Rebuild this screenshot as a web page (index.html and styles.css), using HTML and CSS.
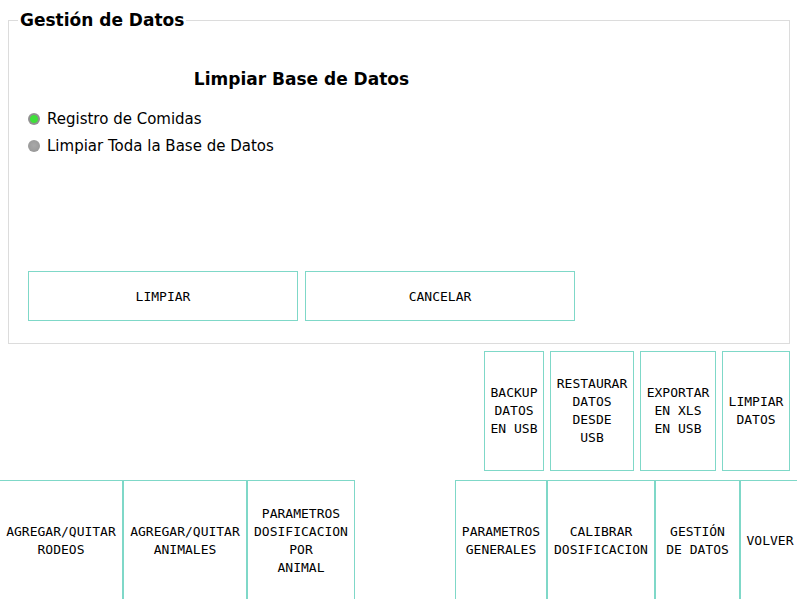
FILE: index.html
```html
<!DOCTYPE html>
<html lang="es">
<head>
<meta charset="utf-8">
<title>Gestión de Datos</title>
<link rel="stylesheet" href="styles.css">
</head>
<body>
<div class="top">
  <fieldset class="panel">
    <legend class="panel-title">Gestión de Datos</legend>
    <div class="panel-inner">
      <h2 class="section-title">Limpiar Base de Datos</h2>
      <div class="options">
        <div class="option"><span class="dot dot-on"></span><span>Registro de Comidas</span></div>
        <div class="option"><span class="dot"></span><span>Limpiar Toda la Base de Datos</span></div>
      </div>
      <div class="actions">
        <button class="btn action">LIMPIAR</button>
        <button class="btn action">CANCELAR</button>
      </div>
    </div>
  </fieldset>
  <div class="subnav">
    <button class="btn sub w-backup">BACKUP<br>DATOS<br>EN USB</button>
    <button class="btn sub w-rest">RESTAURAR<br>DATOS<br>DESDE<br>USB</button>
    <button class="btn sub w-exp">EXPORTAR<br>EN XLS<br>EN USB</button>
    <button class="btn sub w-limp">LIMPIAR<br>DATOS</button>
  </div>
</div>
<div class="mainnav">
  <div class="group">
    <button class="btn nav w-rodeos">AGREGAR/QUITAR<br>RODEOS</button>
    <button class="btn nav w-anim">AGREGAR/QUITAR<br>ANIMALES</button>
    <button class="btn nav w-dosif">PARAMETROS<br>DOSIFICACION<br>POR<br>ANIMAL</button>
  </div>
  <div class="group">
    <button class="btn nav w-gen">PARAMETROS<br>GENERALES</button>
    <button class="btn nav w-cal">CALIBRAR<br>DOSIFICACION</button>
    <button class="btn nav w-gest">GESTIÓN<br>DE DATOS</button>
    <button class="btn nav w-volver">VOLVER</button>
  </div>
</div>
</body>
</html>
```
FILE: styles.css
```css
html, body {
  margin: 0;
  padding: 0;
  overflow: hidden;
  background: #fff;
}
body {
  font-family: "DejaVu Sans", Verdana, sans-serif;
  color: #000;
  width: 797px;
}
.top {
  padding: 8px 7px 0 8px;
}
.panel {
  margin: 0;
  border: 1px solid #dcdcdc;
  padding: 0 19px 22px 19px;
  min-width: 0;
}
.panel-title {
  font-size: 17px;
  font-weight: bold;
  line-height: 24px;
  padding: 0 2px;
  margin-left: -10px;
}
.panel-inner {
  width: 547px;
}
.section-title {
  margin: 0;
  padding-top: 35px;
  text-align: center;
  font-size: 17px;
  font-weight: bold;
  line-height: 24px;
}
.options {
  margin-top: 18px;
  display: flex;
  flex-direction: column;
  gap: 7px;
}
.option {
  display: flex;
  align-items: center;
  gap: 7px;
  font-size: 15px;
  line-height: 20px;
}
.dot {
  width: 12px;
  height: 12px;
  border-radius: 50%;
  background: radial-gradient(circle at 50% 45%, #a8a8a8 0%, #9a9a9a 70%, #8c8c8c 100%);
  flex: none;
}
.dot-on {
  background: radial-gradient(circle, #3ee03a 0 3.5px, #8f8f8f 4.5px, #9c9c9c 100%);
}
.actions {
  margin-top: 115px;
  display: flex;
  gap: 7px;
}
.btn {
  background: #fff;
  border: 1px solid #7fd8c8;
  font-family: "DejaVu Sans Mono", monospace;
  color: #000;
  margin: 0;
  padding: 0 4px;
  cursor: pointer;
  text-align: center;
}
.action {
  flex: 1;
  height: 50px;
  font-size: 13px;
}
.subnav {
  margin-top: 7px;
  display: flex;
  justify-content: flex-end;
  gap: 6px;
}
.sub {
  height: 120px;
  font-size: 13px;
  line-height: 18px;
  padding: 0;
}
.w-backup { width: 60px; }
.w-rest { width: 84px; }
.w-exp { width: 76px; }
.w-limp { width: 68px; }
.mainnav {
  margin-top: 9px;
  display: flex;
  justify-content: space-between;
  width: 800px;
}
.group {
  display: flex;
}
.nav {
  height: 122px;
  font-size: 13px;
  line-height: 18px;
  padding: 0;
}
.w-rodeos { width: 123px; border-left: none; }
.w-anim { width: 124px; }
.w-dosif { width: 108px; }
.w-gen { width: 92px; }
.w-cal { width: 108px; }
.w-gest { width: 85px; }
.w-volver { width: 60px; }
```
